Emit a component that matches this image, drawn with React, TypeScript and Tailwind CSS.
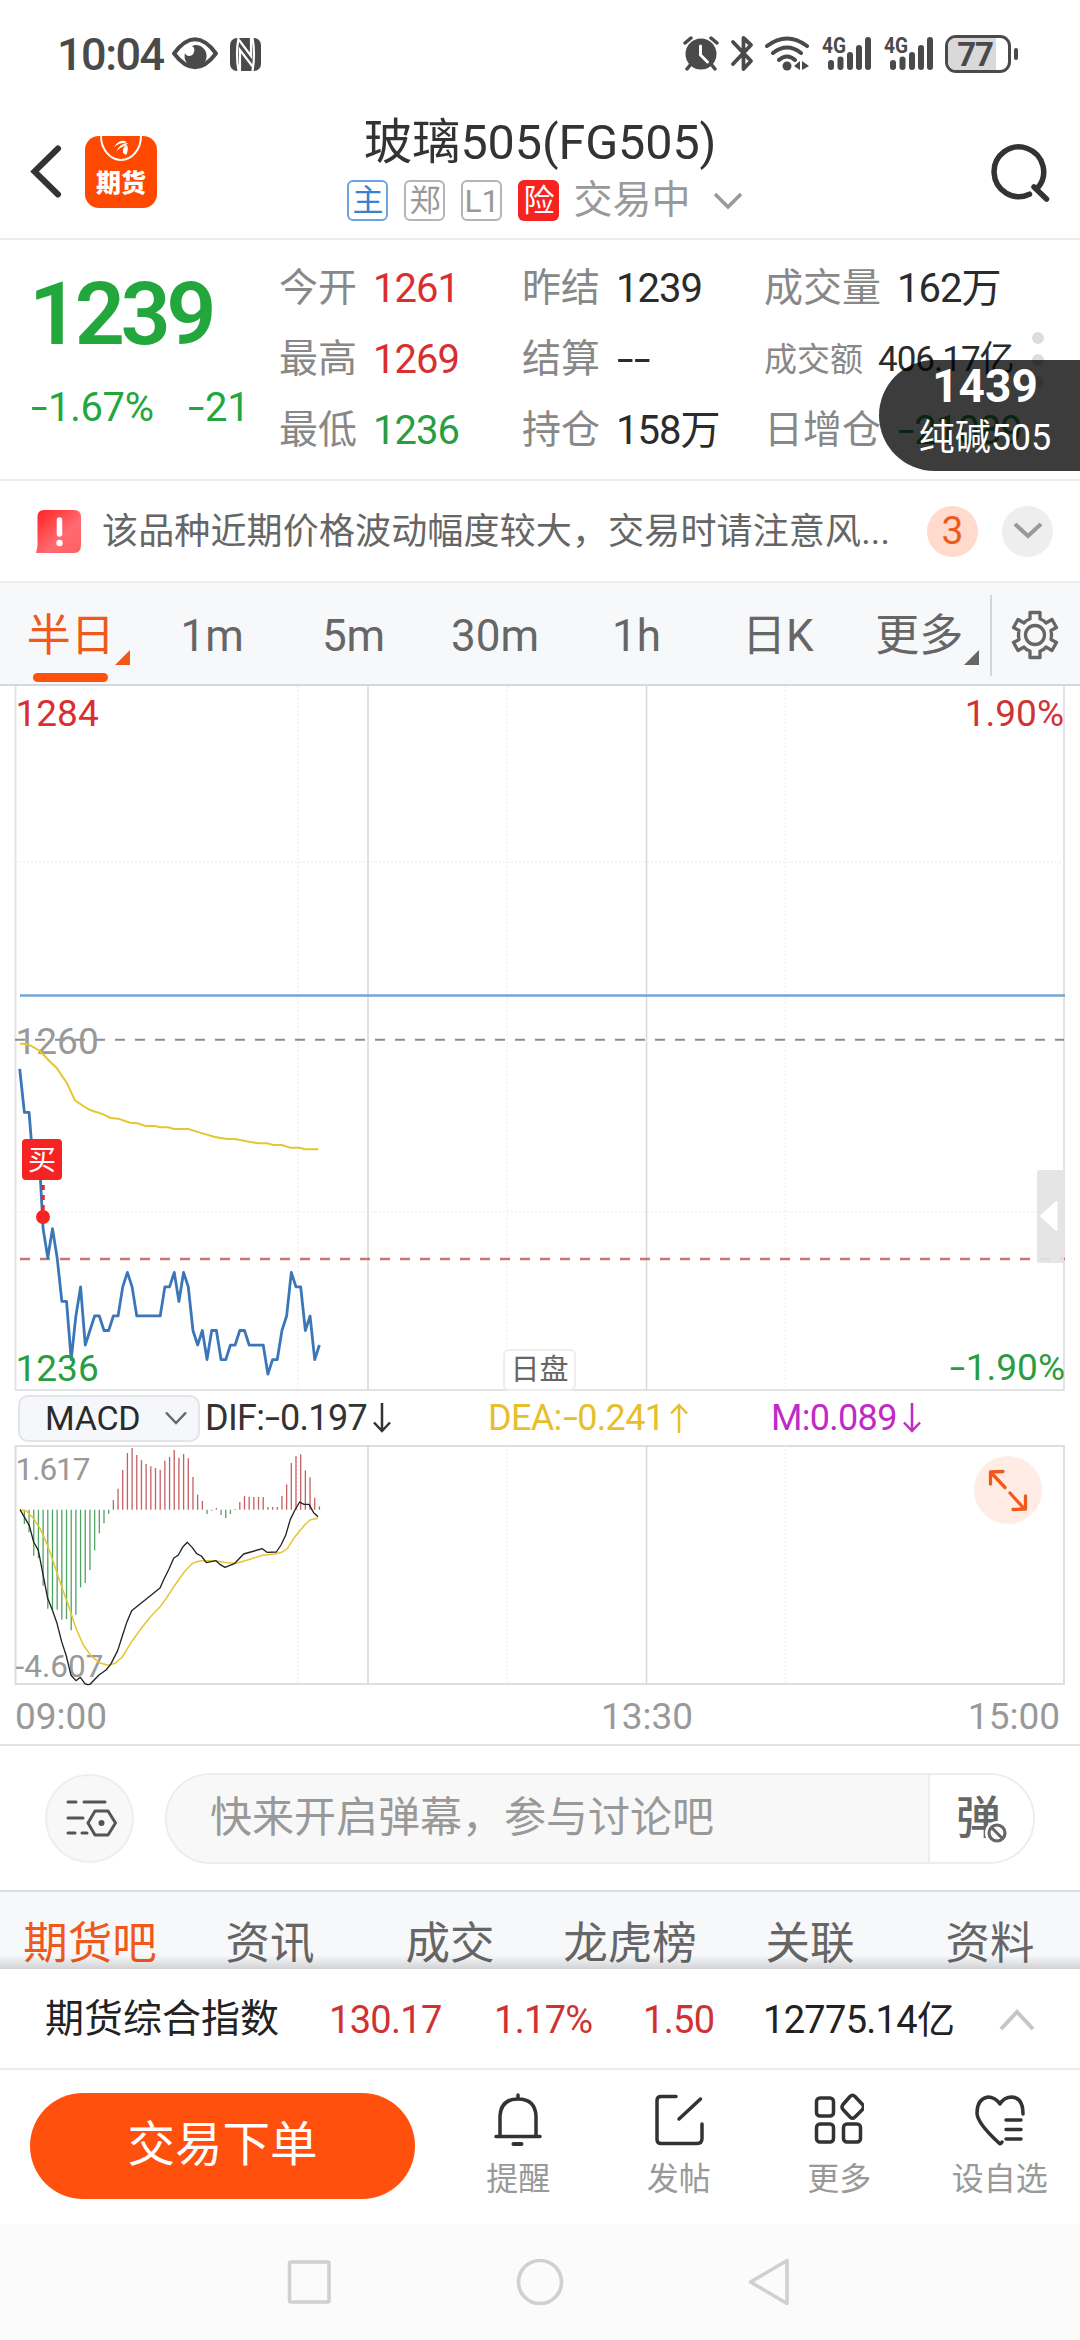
import React from "react";

const PRICES = [
  1258, 1255, 1255, 1251, 1253, 1247, 1245, 1247, 1245, 1242, 1242, 1238, 1241,
  1243, 1239, 1240, 1241, 1241, 1240, 1240, 1241, 1241, 1243, 1244, 1243, 1241,
  1241, 1241, 1241, 1241, 1241, 1243, 1243, 1244, 1242, 1244, 1243, 1240, 1239,
  1240, 1238, 1240, 1240, 1238, 1238, 1239, 1239, 1240, 1240, 1239, 1239, 1239,
  1239, 1237, 1238, 1238, 1240, 1241, 1244, 1243, 1243, 1240, 1241, 1238, 1239
];

const BARS = [
  0, -43, -68, -138, -145, -228, -297, -300, -300, -330, -328, -362, -315, -233,
  -220, -181, -122, -71, -41, -12, 29, 63, 119, 170, 185, 164, 149, 137, 130,
  125, 120, 147, 158, 179, 156, 167, 154, 98, 45, 26, -13, -3, 5, -16, -26, -13,
  2, 23, 41, 39, 38, 38, 38, 8, 8, 8, 41, 76, 140, 161, 166, 118, 97, 36, 10
];

const AVERAGE =
  "60,191 78,192 92,197 120,213 145,240 170,264 200,308 225,361 250,378 270,390 310,403 332,414 355,416 390,428 412,430 437,438 465,438 480,442 505,442 522,447 565,447 600,458 645,471 680,477 705,477 740,484 775,490 800,490 820,495 845,495 872,503 897,503 915,508 955,508";

const DIF =
  "60,389 88,437 101,486 115,511 143,655 157,690 171,730 185,785 199,828 213,886 228,902 241,892 255,911 262,914 270,913 297,885 318,870 332,853 353,812 367,768 381,725 395,692 480,624 492,597 507,567 521,535 535,525 549,500 562,487 577,503 590,521 604,528 619,548 648,542 661,554 675,562 703,551 731,522 787,506 801,517 829,516 843,495 857,466 871,418 885,390 899,366 912,373 927,373 941,398 954,410";

const DEA =
  "60,389 80,394 100,415 120,445 140,490 160,545 185,620 205,675 228,745 250,795 275,830 300,849 325,856 345,850 367,831 395,785 420,750 450,712 479,682 500,653 525,615 555,573 575,552 590,545 605,542 645,542 680,548 712,549 745,539 787,526 825,522 845,517 862,506 885,470 912,437 930,420 954,415";

const minuteX = (i: number) => 19.7 + i * 4.683;
const priceY = (price: number) => 353.7 + (1260 - price) * 14.54;

// Figures with a wide minus sign
function Num({ children }: { children: string }) {
  return (
    <>
      {children.split("").map((ch, i) =>
        ch === "-" ? (
          <span key={i} className="inline-block scale-x-150 px-[0.09em]">-</span>
        ) : (
          ch
        )
      )}
    </>
  );
}

function Signal() {
  return (
    <svg width="50" height="36" viewBox="822 36 50 36" fill="#4a4a4a">
      <text x="822" y="53" fontSize="22" fontWeight="700" textLength="24" lengthAdjust="spacingAndGlyphs">4G</text>
      <rect x="828" y="60" width="6" height="10" rx="3" />
      <rect x="837.5" y="56.500" width="6" height="13.500" rx="3" />
      <rect x="847" y="52" width="6" height="18" rx="3" />
      <rect x="856" y="45" width="6" height="25" rx="3" />
      <rect x="865" y="37" width="6" height="33" rx="3" />
    </svg>
  );
}

function StatusBar() {
  return (
    <div className="flex h-[108px] items-center pl-[57px] text-[#4a4a4a]">
      <span className="w-[114px] text-[45px] leading-none font-medium tracking-[-1.500px]">10:04</span>
      <svg width="48" height="36" viewBox="171 36 48 36">
        <path d="M174 53.500Q195 25 216 53.500Q195 81 174 53.500Z" fill="none" stroke="#4a4a4a" strokeWidth="4" strokeLinejoin="round" />
        <path d="M195 45a11 11 0 1 1-10 8c1 4 8 4 9-1 1-3 0-5-2-6z" fill="#4a4a4a" />
      </svg>
      <svg className="ml-[11px]" width="31" height="33" viewBox="0 0 31 33">
        <rect width="31" height="33" rx="7" fill="#4a4a4a" />
        <path d="M8.500 33Q5.500 16 8.500 0M22.500 33Q25.500 16 22.500 0M9 2L21 18V0M10 33V12L23 29" fill="none" stroke="#fff" strokeWidth="2.200" />
      </svg>
      <svg className="ml-[421px]" width="38" height="36" viewBox="682 36 38 36">
        <path d="M685 43l6-5M717 43l-6-5M687 69l4-5M715 69l-4-5" stroke="#4a4a4a" strokeWidth="3.500" strokeLinecap="round" />
        <circle cx="701" cy="54" r="15.500" fill="#4a4a4a" />
        <path d="M700.500 46v9l7 7" fill="none" stroke="#fff" strokeWidth="3" strokeLinecap="round" />
      </svg>
      <svg className="ml-[10px]" width="24" height="38" viewBox="730 35 24 38">
        <path d="M733 42l18 19-7.500 8V38l7.500 7-18 19" fill="none" stroke="#4a4a4a" strokeWidth="3.800" strokeLinejoin="round" strokeLinecap="round" />
      </svg>
      <svg className="ml-[10px]" width="47" height="38" viewBox="764 35 47 38">
        <g fill="none" stroke="#4a4a4a" strokeWidth="4" strokeLinecap="round">
          <path d="M767 46q20-15 40 0M773 53q14-11 28 0M779 60q8-7 16 0" />
        </g>
        <circle cx="787" cy="66" r="4.500" fill="#4a4a4a" />
        <path d="M794 66l6-5v9zM802 61l7 5-7 4z" fill="#4a4a4a" />
      </svg>
      <div className="ml-[11px] flex gap-3">
        <Signal />
        <Signal />
      </div>
      <div className="ml-[11px] h-[38px] w-[66px] rounded-[11px] border-[3px] border-[#4a4a4a] bg-white">
        <div className="flex h-full w-[48px] items-center justify-end rounded-l-lg bg-[#d9d9d9] pr-[3px] text-[33px] leading-none font-bold tracking-[-1px]">77</div>
      </div>
      <div className="ml-[3px] h-[12px] w-[4px] rounded-sm bg-[#4a4a4a]" />
    </div>
  );
}

function Header() {
  return (
    <div className="flex h-[132px] border-b-2 border-[#ececec]">
      <svg className="mt-[36px] ml-[28px] shrink-0" width="36" height="56" viewBox="28 144 36 56">
        <path d="M58 148.500L34.500 171.500L58 194.500" fill="none" stroke="#333" strokeWidth="6" strokeLinecap="round" />
      </svg>
      <div className="relative mt-[28px] ml-[21px] flex h-[72px] w-[72px] shrink-0 items-end justify-center overflow-hidden rounded-[14px] bg-[#ff4800] pb-[12px]">
        <svg className="absolute top-0 left-0" width="72" height="30" viewBox="0 0 72 30">
          <path d="M16 0a20 24 0 0 0 40 0" fill="none" stroke="#fff" strokeWidth="2" />
          <path d="M29 11q6-9 13-5l-3 1q-5 0-10 4zM31 16q4-9 12-9l-3 3q-5 1-9 6zM38 17q-1-6 4-8 2 5-1 10z" fill="#fff" />
        </svg>
        <span className="text-[25px] leading-none font-black text-white">期货</span>
      </div>
      <div className="flex w-[766px] flex-col items-center">
        <h1 className="mt-[10px] text-[48.500px] leading-[50px] tracking-[-0.100px] text-[#333]">玻璃505(FG505)</h1>
        <div className="mt-[12px] ml-[10px] flex h-[41px] items-center gap-[16px]">
          <span className="flex size-[41px] items-center justify-center rounded-md border-2 border-[#6fa3e0] text-[31px] leading-none text-[#3d7fd0]">主</span>
          <span className="flex size-[41px] items-center justify-center rounded-md border-2 border-[#b5b5b5] text-[31px] leading-none text-[#999]">郑</span>
          <span className="flex size-[41px] items-center justify-center rounded-md border-2 border-[#b5b5b5] text-[32px] leading-none text-[#999]">L1</span>
          <span className="flex size-[41px] items-center justify-center rounded-md bg-[#f72323] text-[31px] leading-none text-white">险</span>
          <span className="ml-[-2px] text-[39px] leading-none text-[#999]">交易中</span>
          <svg className="ml-[6px]" width="30" height="20" viewBox="0 0 30 20">
            <path d="M2 3L15 16L28 3" fill="none" stroke="#999" strokeWidth="3.500" />
          </svg>
        </div>
      </div>
      <svg className="mt-[34px] ml-[67px] shrink-0" width="62" height="62" viewBox="990 142 62 62">
        <path d="M1029.500 194.200A24.800 24.800 0 1 1 1037.100 188.600M1034 187L1046.500 199" fill="none" stroke="#333" strokeWidth="5.500" strokeLinecap="round" />
      </svg>
    </div>
  );
}

interface QuoteItem {
  label: string;
  value: string;
  color: string;
  small?: boolean;
}

const QUOTES: { className: string; labelClass: string; items: QuoteItem[] }[] = [
  {
    className: "w-[243px]",
    labelClass: "w-[94px]",
    items: [
      { label: "今开", value: "1261", color: "text-[#d92f2f]" },
      { label: "最高", value: "1269", color: "text-[#d92f2f]" },
      { label: "最低", value: "1236", color: "text-[#2a9d42]" }
    ]
  },
  {
    className: "w-[242px]",
    labelClass: "w-[94px]",
    items: [
      { label: "昨结", value: "1239", color: "text-[#2b2b2b]" },
      { label: "结算", value: "--", color: "text-[#2b2b2b]" },
      { label: "持仓", value: "158万", color: "text-[#2b2b2b]" }
    ]
  },
  {
    className: "w-[316px]",
    labelClass: "w-[133px]",
    items: [
      { label: "成交量", value: "162万", color: "text-[#2b2b2b]" },
      { label: "成交额", value: "406.17亿", color: "text-[#2b2b2b]", small: true },
      { label: "日增仓", value: "-21089", color: "text-[#2a9d42]" }
    ]
  }
];

function QuotePanel() {
  return (
    <div className="relative flex h-[241px] border-b-2 border-[#ececec]">
      <div className="w-[279px] text-[#23a73c]">
        <div className="mt-[31px] ml-[29px] text-[88px] leading-[86px] font-semibold tracking-[-4.500px]">1239</div>
        <div className="mt-[30px] flex text-[40px] leading-[42px] tracking-[-0.300px]">
          <span className="ml-[30px] w-[157px]"><Num>-1.67%</Num></span>
          <span><Num>-21</Num></span>
        </div>
      </div>
      {QUOTES.map((col) => (
        <div key={col.items[0].label} className={`mt-[13px] ${col.className}`}>
          {col.items.map((item) => (
            <div key={item.label} className="flex h-[71px] items-center leading-none whitespace-nowrap">
              <span className={item.small ? "w-[114px] text-[33px] text-[#888]" : `${col.labelClass} text-[39px] text-[#888]`}>
                {item.label}
              </span>
              <span className={`tracking-[-1px] ${item.small ? "text-[35px]" : "text-[40px]"} ${item.color}`}>
                <Num>{item.value}</Num>
              </span>
            </div>
          ))}
        </div>
      ))}
      <div className="absolute top-[92px] right-[36px] flex flex-col gap-[10px]">
        <i className="size-[12px] rounded-full bg-[#ddd]" />
        <i className="size-[12px] rounded-full bg-[#ddd]" />
        <i className="size-[12px] rounded-full bg-[#ddd]" />
      </div>
      {/* Floating quote */}
      <div className="absolute top-[120px] right-0 flex h-[111px] w-[201px] flex-col items-center rounded-l-full bg-black/[0.765] pl-[11px] text-white">
        <span className="mt-[2px] text-[46px] leading-[48px] font-bold">1439</span>
        <span className="mt-[4px] text-[36px] leading-[48px]">纯碱505</span>
      </div>
    </div>
  );
}

function Notice() {
  return (
    <div className="flex h-[100px] items-center">
      <svg className="ml-[36px]" width="46" height="43" viewBox="0 0 46 43">
        <defs>
          <linearGradient id="alert" x1="0" y1="0" x2="1" y2="1">
            <stop offset="0" stopColor="#ff2020" />
            <stop offset="0.600" stopColor="#ff6a70" />
            <stop offset="1" stopColor="#ff6060" />
          </linearGradient>
        </defs>
        <path d="M8 0H38Q45 0 45 7V35Q45 43 38 43H0L1.500 36V7Q1.500 0 8 0Z" fill="url(#alert)" />
        <path d="M23.500 10V24" stroke="#fff" strokeWidth="5.500" strokeLinecap="round" />
        <circle cx="23.500" cy="33" r="3.200" fill="#fff" />
      </svg>
      <span className="mt-[2px] ml-[20px] w-[825px] text-[36px] leading-none tracking-[0.150px] whitespace-nowrap text-[#666]">
        该品种近期价格波动幅度较大，交易时请注意风...
      </span>
      <span className="flex size-[51px] items-center justify-center rounded-full bg-[#ffdacd] text-[39px] leading-none text-[#ec5a1e]">3</span>
      <span className="ml-[24px] flex size-[51px] items-center justify-center rounded-full bg-[#eee]">
        <svg width="30" height="20" viewBox="0 0 30 20">
          <path d="M2 3L15 15L28 3" fill="none" stroke="#999" strokeWidth="4" />
        </svg>
      </span>
    </div>
  );
}

const PERIODS = ["半日", "1m", "5m", "30m", "1h", "日K", "更多"];

function PeriodTabs() {
  return (
    <div className="flex h-[105px] border-y-2 border-t-[#ececec] border-b-[#d6d8dc] bg-[#f7f8fa]">
      <div className="grid w-[990px] grid-cols-7">
        {PERIODS.map((name, i) => (
          <div
            key={name}
            className={`relative flex justify-center pt-[28px] text-[44px] leading-[50px] ${i === 0 ? "text-[#f0591c]" : "text-[#666]"}`}
          >
            {name}
            {(i === 0 || i === 6) && (
              <svg className="absolute top-[67px] right-[11px]" width="15" height="15" viewBox="0 0 15 15">
                <path d="M15 0V15H0Z" fill="currentColor" />
              </svg>
            )}
            {i === 0 && <i className="absolute bottom-[2px] left-[33px] h-[9px] w-[75px] rounded-full bg-[#ff500e]" />}
          </div>
        ))}
      </div>
      <div className="mt-[12px] h-[81px] w-[2px] bg-[#d4d6da]" />
      <svg className="mt-[26px] ml-[18px]" width="50" height="52" viewBox="-25 -26 50 52" fill="none" stroke="#666" strokeWidth="3.300" strokeLinejoin="round">
        <path d="M-5 -22.500H5V-16Q9 -15 11 -12L17 -15.500L21.500 -7.500L16 -4.500Q17 0 16 4.500L21.500 7.500L17 15.500L11 12Q9 15 5 16V22.500H-5V16Q-9 15 -11 12L-17 15.500L-21.500 7.500L-16 4.500Q-17 0 -16 -4.500L-21.500 -7.500L-17 -15.500L-11 -12Q-9 -15 -5 -16Z" />
        <circle r="9.500" />
      </svg>
    </div>
  );
}

function PriceChart() {
  return (
    <div className="relative h-[705px]">
      <svg className="block" width="1080" height="705" viewBox="0 0 1080 705" fill="none">
        <g stroke="#e3e3e5" strokeWidth="2">
          <path d="M15.500 0V705M1064 0V705M15 704H1065" />
          <path d="M298 0V704M507 0V704M785.500 0V704M15 176H1064M15 526H1064" stroke="#ededed" strokeWidth="1.500" strokeDasharray="1.500 2.500" />
          <path d="M368 0V704M646.500 0V704" stroke="#d8d8d8" strokeWidth="1.500" />
        </g>
        <path d="M20 309.500H1065" stroke="#73a5d6" strokeWidth="2.500" />
        <path d="M15 353.700H1064" stroke="#8c8c8c" strokeWidth="2" strokeDasharray="10 10" />
        <path d="M20 573H1065" stroke="#cb7272" strokeWidth="2.300" strokeDasharray="10 10" />
        <g fontSize="37">
          <text x="15.500" y="40" fill="#d92f2f">1284</text>
          <text x="1064" y="40" fill="#cf3434" textAnchor="end">1.90%</text>
          <text x="15.500" y="368" fill="#999">1260</text>
        </g>
        <polyline points={AVERAGE} transform="translate(0 294) scale(.33333)" stroke="#e6c62e" strokeWidth="6" />
        <polyline
          points={PRICES.map((p, i) => `${minuteX(i)},${priceY(p)}`).join(" ")}
          stroke="#3b76b8"
          strokeWidth="2.800"
          strokeLinejoin="round"
        />
        <text x="15.500" y="695" fontSize="37" fill="#2a9d42">1236</text>
        <path d="M43 499V530" stroke="#d92f2f" strokeWidth="3.500" strokeDasharray="5 5" />
        <circle cx="43" cy="531" r="7" fill="#f72323" />
        <rect x="22" y="453" width="40" height="41" rx="4" fill="#f72323" />
        <text x="42" y="483.500" fontSize="28" fill="#fff" textAnchor="middle">买</text>
        <rect x="1037" y="484" width="27" height="93" rx="2" fill="#e3e3e3" fillOpacity=".93" />
        <path d="M1041 530L1056.500 516V544Z" fill="#fff" stroke="#fff" strokeWidth="2" strokeLinejoin="round" />
      </svg>
      <div className="absolute bottom-0 left-[503px] flex h-[42px] w-[73px] items-center justify-center rounded-md border-2 border-[#eee] bg-white text-[29px] leading-none text-[#666]">日盘</div>
      <div className="absolute right-[15px] bottom-[1px] text-[37px] leading-[44px] text-[#2a9d42]"><Num>-1.90%</Num></div>
    </div>
  );
}

function Arrow({ up }: { up?: boolean }) {
  return (
    <svg className={up ? "ml-[5px] rotate-180" : "ml-[5px]"} width="20" height="32" viewBox="0 0 20 32" fill="none" stroke="currentColor" strokeWidth="2.500">
      <path d="M10 1V29M2 20.500L10 29L18 20.500" />
    </svg>
  );
}

function IndicatorBar() {
  return (
    <div className="flex h-[54px] items-center text-[36px] leading-none tracking-[-0.700px]">
      <button className="ml-[18px] flex h-[47px] w-[182px] items-center rounded-[10px] border-2 border-[#e2e4ea] bg-[#f6f7fa] pl-[25px] text-[34px] text-[#2b2b2b]">
        <span className="w-[119px] text-left tracking-[-0.300px]">MACD</span>
        <svg width="24" height="14" viewBox="0 0 24 14">
          <path d="M2 1.500L12 12L22 1.500" fill="none" stroke="#666" strokeWidth="2.500" />
        </svg>
      </button>
      <span className="ml-[5px] flex w-[283px] items-center text-[#333]"><span><Num>DIF:-0.197</Num></span><Arrow /></span>
      <span className="flex w-[283px] items-center text-[#e6bf2d]"><span><Num>DEA:-0.241</Num></span><Arrow up /></span>
      <span className="flex items-center text-[#bf2bc6]">M:0.089<Arrow /></span>
    </div>
  );
}

function MacdChart() {
  return (
    <div className="relative h-[301px] border-b-2 border-[#e2e2e2]">
      <svg className="block" width="1080" height="241" viewBox="0 0 1080 241" fill="none">
        <path d="M15 1H1065M15.500 0V240M1064 0V240M15 239H1065" stroke="#dedee0" strokeWidth="2" />
        <path d="M298 0V239M507 0V239M785.500 0V239" stroke="#ededed" strokeWidth="1.500" strokeDasharray="1.500 2.500" />
        <path d="M368 0V239M646.500 0V239" stroke="#d8d8d8" strokeWidth="1.500" />
        <text x="15.500" y="35" fontSize="31.500" fill="#999" textLength="75">1.617</text>
        {BARS.map((v, i) => (
          <path key={i} d={`M${minuteX(i)} 64.700V${64.7 - v / 3}`} stroke={v > 0 ? "#c65f61" : "#4fa363"} strokeWidth="1.300" />
        ))}
        <text x="15.500" y="232" fontSize="31.500" fill="#999" textLength="88">-4.607</text>
        <g transform="translate(0 -65) scale(.33333)">
          <polyline points={DEA} stroke="#e6c62e" strokeWidth="4.500" strokeLinejoin="round" />
          <polyline points={DIF} stroke="#222" strokeWidth="4" strokeLinejoin="round" />
        </g>
      </svg>
      <div className="flex pt-[9px] text-[37px] leading-[44px] text-[#999]">
        <span className="w-[432px] pl-[15px]">09:00</span>
        <span className="w-[430px] text-center">13:30</span>
        <span className="flex-1 pr-[20px] text-right">15:00</span>
      </div>
      <button className="absolute top-[11px] left-[974px] flex size-[68px] items-center justify-center rounded-full bg-[#ffece5]">
        <svg width="44" height="44" viewBox="0 0 44 44" fill="none" stroke="#f0591c" strokeWidth="3.300" strokeLinecap="round" strokeLinejoin="round">
          <path d="M19 19.500L5 4.500M4.500 16V4L17 3.500M24 25L38 40.500M39.500 28V41L27 41.500" />
        </svg>
      </button>
    </div>
  );
}

function CommentBar() {
  return (
    <div className="flex h-[144px] items-center">
      <button className="ml-[45px] flex size-[89px] items-center justify-center rounded-full border-2 border-[#eee] bg-[#f8f8f8]">
        <svg className="ml-[4px] mt-[2px]" width="54" height="40" viewBox="66 1800 54 40" fill="none" stroke="#555" strokeWidth="3" strokeLinecap="round">
          <path d="M69 1803H77M85 1803H106M69 1819H84M69 1834H76M83 1834H88" />
          <path d="M96 1812H109L116.500 1824L109 1836H96L89 1824Z" strokeLinejoin="round" />
          <circle cx="102.500" cy="1824" r="3" fill="#555" stroke="none" />
        </svg>
      </button>
      <div className="ml-[31px] flex h-[91px] w-[870px] overflow-hidden rounded-full border-2 border-[#ededed]">
        <div className="flex w-[761px] items-center bg-[#f8f8f8] pl-[43px] text-[42px] leading-none text-[#999]">
          快来开启弹幕，参与讨论吧
        </div>
        <div className="relative flex flex-1 items-center border-l-2 border-[#eee] bg-white pl-[26px] text-[45px] leading-none font-medium text-[#666]">
          弹
          <svg className="absolute top-[46px] left-[55px]" width="24" height="24" viewBox="0 0 24 24">
            <circle cx="12" cy="12" r="12" fill="#fff" />
            <path d="M6.500 6.500L17.500 17.500" stroke="#666" strokeWidth="3" />
            <circle cx="12" cy="12" r="8" fill="none" stroke="#666" strokeWidth="3.200" />
          </svg>
        </div>
      </div>
    </div>
  );
}

const SECTIONS = ["期货吧", "资讯", "成交", "龙虎榜", "关联", "资料"];

function SectionTabs() {
  return (
    <div className="relative h-[79px] border-t-2 border-[#dcdee2] bg-[#f7f8fa]">
      <div className="grid grid-cols-6 pt-[27px] text-center text-[44.500px] leading-[50px] whitespace-nowrap text-[#666]">
        {SECTIONS.map((name, i) => (
          <span key={name} className={i === 0 ? "text-[#f0591c]" : ""}>{name}</span>
        ))}
      </div>
      <div className="absolute inset-x-0 bottom-0 h-[14px] bg-linear-to-b from-black/0 to-black/15" />
    </div>
  );
}

function IndexBar() {
  return (
    <div className="flex h-[101px] items-center border-b-2 border-[#ececec] pt-[2px] pl-[45px] text-[38px] leading-none tracking-[-0.700px] text-[#d03232]">
      <span className="w-[284px] text-[39px] tracking-normal text-[#222]">期货综合指数</span>
      <span className="w-[165px]">130.17</span>
      <span className="w-[149px]">1.17%</span>
      <span className="w-[120px]">1.50</span>
      <span className="w-[236px] text-[#222]">12775.14亿</span>
      <svg width="36" height="24" viewBox="0 0 36 24">
        <path d="M2 21L18 4L34 21" fill="none" stroke="#c6c6c6" strokeWidth="4" />
      </svg>
    </div>
  );
}

const ACTIONS = [
  {
    name: "提醒",
    icon: (
      <>
        <path d="M25 6V2M7 43V23Q8 6 25 6Q42 6 43 23V43M3 43.500H47" />
        <path d="M20.500 51H28.500" strokeWidth="4" />
      </>
    )
  },
  {
    name: "发帖",
    icon: <path d="M22 3.500H7Q3 3.500 3 7.500V46.500Q3 50.500 7 50.500H43Q48 50.500 48 45.500V31M25 26L46.500 6" />
  },
  {
    name: "更多",
    icon: (
      <>
        <rect x="2.500" y="5" width="17" height="18" rx="3.500" />
        <rect x="2.500" y="31" width="17" height="18" rx="3.500" />
        <rect x="29.500" y="31" width="17" height="18" rx="3.500" />
        <path d="M36 3.500Q38.500 1 41 3.500L48.500 11.500Q50.500 14 48.500 16.500L41 24Q38.500 26.500 36 24L29 16.500Q27 14 29 11.500Z" />
      </>
    )
  },
  {
    name: "设自选",
    icon: <path d="M48 21Q48 5 37 4Q29 4 25 11Q20 4 13 4Q2 6 2 20Q2 30 24.500 50.500Q26 51 27 49M31 27H46M31 36.500H46M31 46H46" />
  }
];

function ActionBar() {
  return (
    <div className="flex h-[154px]">
      <button className="mt-[23px] ml-[30px] h-[106px] w-[385px] rounded-full bg-[#ff500e] text-[47.500px] leading-none text-white">交易下单</button>
      <div className="ml-[23px] grid flex-1 grid-cols-[repeat(4,160.500px)]">
        {ACTIONS.map((item) => (
          <div key={item.name} className="flex flex-col items-center pt-[23px]">
            <svg width="50" height="54" viewBox="0 0 50 54" fill="none" stroke="#333" strokeWidth="3.500" strokeLinecap="round" strokeLinejoin="round">
              {item.icon}
            </svg>
            <span className="mt-[14px] text-[32px] leading-[36px] text-[#999]">{item.name}</span>
          </div>
        ))}
      </div>
    </div>
  );
}

function SystemNav() {
  return (
    <div className="flex h-[116px] items-start bg-[#fbfbfb] pt-[33px]">
      <svg className="ml-[286px]" width="506" height="50" viewBox="286 2257 506 50" fill="none" stroke="#d0d0d0" strokeWidth="3.600" strokeLinejoin="round">
        <rect x="289.500" y="2262" width="39.500" height="40" rx="1.500" />
        <circle cx="540" cy="2282" r="21.500" />
        <path d="M787 2260.500V2303.500L750.500 2282Z" />
      </svg>
    </div>
  );
}

export default function App() {
  return (
    <div className="h-[2340px] w-[1080px] overflow-hidden bg-white font-['Roboto','Noto_Sans_CJK_SC',sans-serif]">
      <StatusBar />
      <Header />
      <QuotePanel />
      <Notice />
      <PeriodTabs />
      <PriceChart />
      <IndicatorBar />
      <MacdChart />
      <CommentBar />
      <SectionTabs />
      <IndexBar />
      <ActionBar />
      <SystemNav />
    </div>
  );
}
